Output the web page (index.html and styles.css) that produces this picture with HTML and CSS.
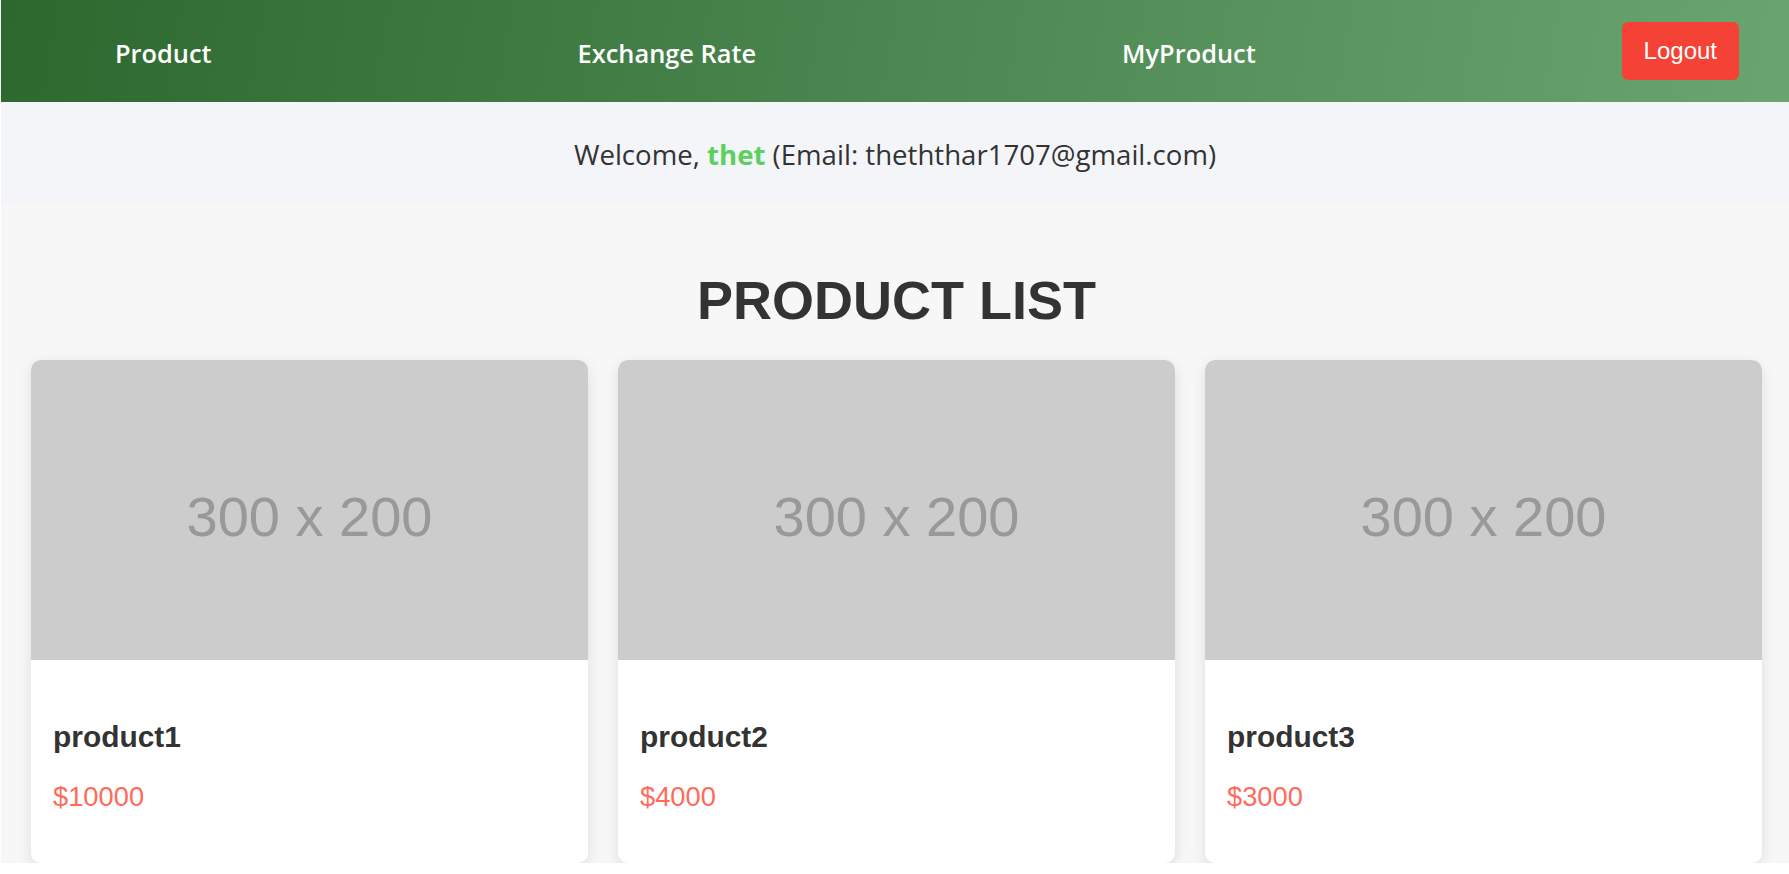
FILE: index.html
```html
<!DOCTYPE html>
<html lang="en">
<head>
<meta charset="utf-8">
<title>Product List</title>
<link rel="stylesheet" href="styles.css">
</head>
<body>
<nav class="navbar">
  <a class="nav-link" href="#">Product</a>
  <a class="nav-link" href="#">Exchange Rate</a>
  <a class="nav-link" href="#">MyProduct</a>
  <button class="logout-btn" type="button">Logout</button>
</nav>
<div class="welcome">
  Welcome, <span class="username">thet</span> (Email: theththar1707@gmail.com)
</div>
<main class="main">
  <h1 class="page-title">PRODUCT LIST</h1>
  <div class="product-grid">
    <div class="card">
      <div class="card-image"><span>300 x 200</span></div>
      <div class="card-body">
        <h3 class="card-title">product1</h3>
        <p class="card-price">$10000</p>
      </div>
    </div>
    <div class="card">
      <div class="card-image"><span>300 x 200</span></div>
      <div class="card-body">
        <h3 class="card-title">product2</h3>
        <p class="card-price">$4000</p>
      </div>
    </div>
    <div class="card">
      <div class="card-image"><span>300 x 200</span></div>
      <div class="card-body">
        <h3 class="card-title">product3</h3>
        <p class="card-price">$3000</p>
      </div>
    </div>
  </div>
</main>
</body>
</html>
```
FILE: styles.css
```css
html {
  background: #ffffff;
}
body {
  margin: 0 0 0 1px;
  background: #f7f7f7;
  font-family: "Open Sans", "Noto Sans", sans-serif;
  color: #333;
  overflow: hidden;
}
.navbar {
  height: 102px;
  display: flex;
  align-items: center;
  justify-content: space-between;
  padding: 0 50px 0 114px;
  background: linear-gradient(100deg, #2d682f 0%, #4c8650 50%, #6aa46e 100%);
  box-sizing: border-box;
}
.nav-link {
  color: #ffffff;
  text-decoration: none;
  font-size: 25.4px;
  font-weight: 600;
  padding-top: 3px;
}
.logout-btn {
  background: #f44336;
  color: #fff;
  border: none;
  border-radius: 6px;
  font-family: "Liberation Sans", Arial, sans-serif;
  font-size: 24px;
  padding: 15px 22px;
  height: 58px;
  cursor: pointer;
}
.welcome {
  background: #f4f5f9;
  text-align: center;
  font-size: 27.6px;
  color: #333;
  padding: 32.5px 0 29.6px;
}
.username {
  color: #5ccf5f;
  font-weight: 700;
}
.main {
  padding: 30px 27px 0 30px;
  font-family: "Liberation Sans", Arial, sans-serif;
}
.page-title {
  text-align: center;
  font-size: 54px;
  font-weight: 700;
  color: #333;
  margin: 36.5px 0 29.8px;
}
.product-grid {
  display: grid;
  grid-template-columns: repeat(3, 1fr);
  gap: 30px;
}
.card {
  background: #fff;
  border-radius: 10px;
  overflow: hidden;
  box-shadow: 0 4px 14px rgba(0, 0, 0, 0.1);
}
.card-image {
  height: 300px;
  background: #cccccc;
  display: flex;
  align-items: center;
  justify-content: center;
  box-sizing: border-box;
  padding-top: 13px;
}
.card-image span {
  font-size: 56px;
  color: #999999;
}
.card-body {
  padding: 22px;
}
.card-title {
  font-size: 29.9px;
  font-weight: 700;
  color: #333;
  margin: 37.8px 0 26.6px;
}
.card-price {
  font-size: 27.3px;
  color: #ff6b5b;
  margin: 0 0 27.8px;
}
```
